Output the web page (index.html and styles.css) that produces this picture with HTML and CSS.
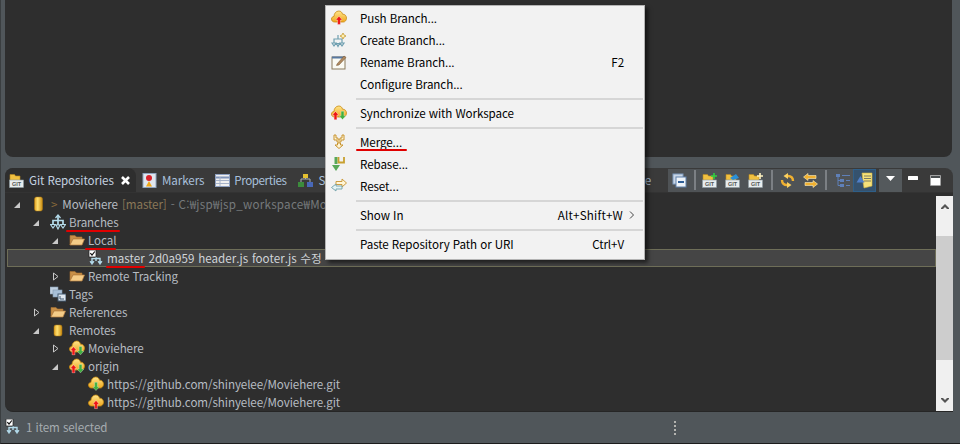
FILE: index.html
```html
<!DOCTYPE html>
<html lang="ko">
<head>
<meta charset="utf-8">
<title>Git Repositories</title>
<link rel="stylesheet" href="styles.css">
</head>
<body>
<svg class="defs" width="0" height="0" aria-hidden="true">
  <defs>
    <linearGradient id="gold" x1="0" y1="0" x2="1" y2="0"><stop offset="0" stop-color="#e0a020"/><stop offset=".4" stop-color="#ffe070"/><stop offset="1" stop-color="#c88a10"/></linearGradient>
    <linearGradient id="cloudfill" x1="0" y1="0" x2="0" y2="1"><stop offset="0" stop-color="#ffe58a"/><stop offset="1" stop-color="#f0a820"/></linearGradient>
    <symbol id="cloud" viewBox="0 0 16 16"><path d="M3.500 12C1.500 12 .5 10.500 .5 9S1.500 6.500 3 6.500C3 3.500 5 1 7.800 1c2 0 3.300 1.300 3.700 3.200 2.300-.2 4 1.600 4 3.900S14 12 12.500 12z" fill="url(#cloudfill)" stroke="#c98a10" stroke-width=".8"/></symbol>
    <symbol id="up" viewBox="0 0 8 10"><path d="M4 .3 7.800 4.700H5.600V9.800H2.400V4.700H.2z" fill="#ee1414" stroke="#fff" stroke-width=".4"/></symbol>
    <symbol id="down" viewBox="0 0 8 10"><path d="M4 9.700 7.800 5.300H5.600V.2H2.400V5.300H.2z" fill="#40b040" stroke="#e0f4e0" stroke-width=".4"/></symbol>
    <symbol id="branches" viewBox="0 0 16 16"><g fill="none" stroke="#b4dcec" stroke-width="1.700"><path d="M8 2V7M3 10V6.500H13V10"/><path d="M5.500 4 8 1 10.500 4" stroke-width="1.200"/><path d="M.5 10.500H5.500L3 14zM10.500 10.500H15.500L13 14z" stroke-width="1.100" fill="#2e2e2e"/><path d="M6 11H10L8 15z" stroke-width="1.100"/><path d="M8 7V11"/></g></symbol>
    <symbol id="folder" viewBox="0 0 16 16"><path d="M1 13V3.500H6L7.500 5H13V7H4L1 13z" fill="#c89048" stroke="#a87030" stroke-width=".6"/><path d="M1 13 4 7H15.500L13 13z" fill="#f4cc88" stroke="#b88040" stroke-width=".7"/></symbol>
    <symbol id="branchcheck" viewBox="0 0 16 16"><g fill="none" stroke="#b4dcec" stroke-width="1.400"><path d="M8 7V11M4 11V8.500H12V11"/><path d="M2 11.500H6L4 14.500zM10 11.500H14L12 14.500z" fill="#b4dcec" stroke-width=".8"/></g><rect x="1" y="0" width="7" height="7" fill="#fff" stroke="#222" stroke-width=".7"/><path d="M2.300 3.200 4 5 6.800 1.500" fill="none" stroke="#111" stroke-width="1.200"/></symbol>
    <symbol id="gitfolder" viewBox="0 0 15 15"><path d="M1 8V1.500H5.500L6.500 3H11V8z" fill="#f0c040" stroke="#b88820" stroke-width=".6"/><rect x=".5" y="7" width="14" height="7.500" fill="#e8edee" stroke="#8c9aa0" stroke-width=".6"/><text x="7.500" y="13.200" class="gittext">GIT</text></symbol>
  </defs>
</svg>

<div class="app">
  <div class="editor"></div>

  <section class="view">
    <header class="tabbar">
      <div class="tab tab-active">
        <svg class="ico15"><use href="#gitfolder"/></svg>
        <span class="tab-label">Git Repositories</span>
        <svg class="close" viewBox="0 0 11 11"><path d="M2 2 9 9M9 2 2 9" stroke="#fff" stroke-width="2.600"/></svg>
      </div>
      <div class="tab">
        <svg class="ico15" viewBox="0 0 15 15"><rect x="1" y=".5" width="13" height="14" fill="#dfe6ee" stroke="#8ea4c0"/><circle cx="7" cy="5" r="3" fill="#d8202a"/><path d="M7 8 10 13.500H4z" fill="#f0a818"/></svg>
        <span>Markers</span>
      </div>
      <div class="tab tab-tight">
        <svg class="ico15" viewBox="0 0 15 15"><rect x=".5" y="1.500" width="14" height="12" fill="#f0f0f0" stroke="#8ea0c0"/><path d="M1 4.500H14" stroke="#7f93b8" stroke-width="2"/><path d="M1 7.500H14M1 10.500H14M5 4V13" stroke="#a6b2c8"/></svg>
        <span>Properties</span>
      </div>
      <div class="tab">
        <svg class="ico15" viewBox="0 0 15 15"><path d="M7.500 2V6M3 9V6H12V9" fill="none" stroke="#a8b0b8"/><rect x="5" y="1" width="5" height="4" fill="#e4c030"/><rect x="0" y="9" width="6" height="5" fill="#3c8c3c"/><rect x="9" y="9" width="6" height="5" fill="#4868b8"/></svg>
        <span>S</span>
      </div>
      <div class="tab tab-last"><span>e</span></div>
      <div class="tools">
        <div class="toolset">
          <svg class="ico15" viewBox="0 0 15 15"><rect x="1" y="1" width="10" height="10" fill="#c9d6e6" stroke="#7f9cc0"/><rect x="4" y="4" width="10" height="10" fill="#eef3f8" stroke="#5f80aa"/><path d="M6 9H12" stroke="#2f5f98" stroke-width="2"/></svg>
          <i class="tool-sep sep-a"></i>
          <svg class="ico15" viewBox="0 0 15 15"><use href="#gitfolder" width="15" height="15"/><path d="M12 0V6M9 3H15" stroke="#30d040" stroke-width="1.600"/></svg>
          <svg class="ico15" viewBox="0 0 15 15"><use href="#gitfolder" width="15" height="15"/><path d="M5 5 11 1 14 5 8 7z" fill="#2a90d8"/></svg>
          <svg class="ico15" viewBox="0 0 15 15"><use href="#gitfolder" width="15" height="15"/><path d="M12 0V6M9 3H15" stroke="#fff4c0" stroke-width="1.600"/></svg>
          <i class="tool-sep sep-b"></i>
          <svg class="ico15" viewBox="0 0 15 15"><g fill="none" stroke="#f0b030" stroke-width="2.400"><path d="M13 8C13 4.500 11 3 8 3"/><path d="M2 7C2 10.500 4 12 7 12"/></g><path d="M8 0 3.500 3 8 6zM7 9 11.500 12 7 15z" fill="#fbd060"/></svg>
          <svg class="ico15" viewBox="0 0 15 15"><g fill="#f0b030" stroke="#fff0c0" stroke-width=".6"><path d="M.5 4 5 .5V2.500H13V5.500H5V7.500z"/><path d="M14.500 11 10 7.500V9.500H2V12.500H10V14.500z"/></g></svg>
          <i class="tool-sep sep-c"></i>
          <svg class="ico15 tree-ico" viewBox="0 0 15 15"><g fill="#5f80b8"><rect x="0" y="1" width="4" height="3"/><rect x="4" y="6" width="4" height="3"/><rect x="4" y="11" width="4" height="3"/></g><path d="M2 4V12.500H4M2 7.500H4M6 2.500H14M10 7.500H14M10 12.500H14" stroke="#5f80b8" fill="none"/></svg>
          <span class="toggled"><svg class="ico-doc" viewBox="0 0 17 17"><path d="M6 1H16V14L8 16 7 10z" fill="#f6e27a" stroke="#cfb040" stroke-width=".6"/><path d="M8 4H15M8 6.500H15M8 9H15" stroke="#7a7a60"/><path d="M4.500 4 8.500 10.500H.5z" fill="#4f7fc8"/></svg></span>
        </div>
        <span class="viewmenu"><svg class="ico-tri" viewBox="0 0 9 5"><path d="M0 0H9L4.500 5z" fill="#fff"/></svg></span>
        <span class="winbtn win-min"><svg class="ico-min" viewBox="0 0 10 4"><rect width="10" height="4" fill="#fff" rx=".5"/></svg></span>
        <span class="winbtn"><svg class="ico-max" viewBox="0 0 11 11"><rect x=".5" y=".5" width="10" height="10" fill="#fff" stroke="#aaa" stroke-width=".5"/><rect x="1" y="1" width="9" height="2" fill="#4a4e50"/></svg></span>
      </div>
    </header>

    <div class="treepane">
      <div class="tree">
        <div class="row l0">
          <svg class="tw" viewBox="0 0 11 11"><path d="M8 3V9H2z" fill="#c8c8c8"/></svg>
          <svg class="ic" viewBox="0 0 16 16"><rect x="3.500" y="1" width="8" height="14" rx="2" fill="url(#gold)" stroke="#b07a10" stroke-width=".5"/></svg>
          <span class="dirty">&gt;</span><span class="repo-name">Moviehere</span><span class="branchtag">[master]</span><span class="path">- C:₩jsp₩jsp_workspace₩Mo</span>
        </div>
        <div class="row l1">
          <svg class="tw" viewBox="0 0 11 11"><path d="M8 3V9H2z" fill="#c8c8c8"/></svg>
          <svg class="ic"><use href="#branches"/></svg>
          <span class="mark mark-branches">Branches</span>
        </div>
        <div class="row l2">
          <svg class="tw" viewBox="0 0 11 11"><path d="M8 3V9H2z" fill="#c8c8c8"/></svg>
          <svg class="ic"><use href="#folder"/></svg>
          <span class="mark mark-local">Local</span>
        </div>
        <div class="row l3 selected">
          <span class="tw"></span>
          <svg class="ic"><use href="#branchcheck"/></svg>
          <span class="bright"><span class="mark mark-master">master</span> 2d0a959 header.js footer.js 수정</span>
        </div>
        <div class="row l2">
          <svg class="tw" viewBox="0 0 11 11"><path d="M3.500 2 8 5.500 3.500 9z" fill="none" stroke="#c8c8c8"/></svg>
          <svg class="ic"><use href="#folder"/></svg>
          <span>Remote Tracking</span>
        </div>
        <div class="row l1">
          <span class="tw"></span>
          <svg class="ic" viewBox="0 0 16 16"><rect x="0" y="1" width="8" height="7" fill="#c0d0e0" stroke="#8098b0" stroke-width=".6"/><rect x="3" y="4" width="9" height="7" fill="#a8c0d8" stroke="#8098b0" stroke-width=".6"/><rect x="8" y="8" width="8" height="7" fill="#dfe8f0" stroke="#405870"/><path d="M10 10V13H14" stroke="#405870" fill="none"/></svg>
          <span>Tags</span>
        </div>
        <div class="row l1">
          <svg class="tw" viewBox="0 0 11 11"><path d="M3.500 2 8 5.500 3.500 9z" fill="none" stroke="#c8c8c8"/></svg>
          <svg class="ic"><use href="#folder"/></svg>
          <span>References</span>
        </div>
        <div class="row l1">
          <svg class="tw" viewBox="0 0 11 11"><path d="M8 3V9H2z" fill="#c8c8c8"/></svg>
          <svg class="ic" viewBox="0 0 16 16"><rect x="4" y="3" width="8" height="11" rx="2" fill="url(#gold)" stroke="#b07a10" stroke-width=".5"/></svg>
          <span>Remotes</span>
        </div>
        <div class="row l2">
          <svg class="tw" viewBox="0 0 11 11"><path d="M3.500 2 8 5.500 3.500 9z" fill="none" stroke="#c8c8c8"/></svg>
          <svg class="ic" viewBox="0 0 16 16"><use href="#cloud" width="16" height="16"/><use href="#up" x="1" y="6" width="7" height="9.500"/><use href="#down" x="8" y="6" width="7" height="9.500"/></svg>
          <span>Moviehere</span>
        </div>
        <div class="row l2">
          <svg class="tw" viewBox="0 0 11 11"><path d="M8 3V9H2z" fill="#c8c8c8"/></svg>
          <svg class="ic" viewBox="0 0 16 16"><use href="#cloud" width="16" height="16"/><use href="#up" x="1" y="6" width="7" height="9.500"/><use href="#down" x="8" y="6" width="7" height="9.500"/></svg>
          <span>origin</span>
        </div>
        <div class="row l3">
          <span class="tw"></span>
          <svg class="ic" viewBox="0 0 16 16"><use href="#cloud" width="16" height="16"/><use href="#down" x="4.500" y="5.500" width="7" height="10"/></svg>
          <span>https://github.com/shinyelee/Moviehere.git</span>
        </div>
        <div class="row l3">
          <span class="tw"></span>
          <svg class="ic" viewBox="0 0 16 16"><use href="#cloud" width="16" height="16"/><use href="#up" x="4.500" y="5.500" width="7" height="10"/></svg>
          <span>https://github.com/shinyelee/Moviehere.git</span>
        </div>
      </div>
      <div class="scrollbar">
        <svg class="sb-arrow" viewBox="0 0 8 6"><path d="M0 5 4 1 8 5V6H6L4 4 2 6H0z" fill="#555"/></svg>
        <div class="sb-track"><div class="sb-thumb"></div></div>
        <svg class="sb-arrow" viewBox="0 0 8 6"><path d="M0 1 4 5 8 1V0H6L4 2 2 0H0z" fill="#555"/></svg>
      </div>
    </div>
  </section>

  <footer class="status">
    <svg class="status-ic"><use href="#branchcheck"/></svg>
    <span class="status-text">1 item selected</span>
    <span class="grip"><i></i><i></i><i></i><i></i></span>
  </footer>
</div>

<nav class="menu">
  <div class="mi"><svg class="mi-ic" viewBox="0 0 16 16"><use href="#cloud" width="16" height="16"/><use href="#up" x="4.500" y="5" width="7" height="10.500"/></svg><span class="mi-label">Push Branch...</span></div>
  <div class="mi"><svg class="mi-ic" viewBox="0 0 16 16"><g fill="none" stroke="#6f9fb0" stroke-width="1.200"><path d="M7 3V7M3 11V7H11V11"/><path d="M1 11H5L3 14zM5.500 11.500H8.500L7 14.500zM9 11H13L11 14z"/></g><path d="M12 1 13 3 15 4 13 5 12 7 11 5 9 4 11 3z" fill="#fff0b0" stroke="#c09020" stroke-width=".7"/></svg><span class="mi-label">Create Branch...</span></div>
  <div class="mi"><svg class="mi-ic" viewBox="0 0 16 16"><rect x="1" y="3" width="13" height="12" fill="#fbfbf4" stroke="#8a7a5c"/><path d="M1 3.500H14" stroke="#5878a0" stroke-width="2"/><path d="M6 10 13 2 15 3.500 8 11 5.500 11.500z" fill="#b08a60" stroke="#705030" stroke-width=".5"/></svg><span class="mi-label">Rename Branch...</span><span class="mi-key">F2</span></div>
  <div class="mi"><span class="mi-ic"></span><span class="mi-label">Configure Branch...</span></div>
  <hr class="sep">
  <div class="mi"><svg class="mi-ic" viewBox="0 0 16 16"><use href="#cloud" width="16" height="16"/><use href="#up" x="1" y="5.500" width="7" height="10"/><use href="#down" x="8" y="5.500" width="7" height="10"/></svg><span class="mi-label">Synchronize with Workspace</span></div>
  <hr class="sep">
  <div class="mi"><svg class="mi-ic" viewBox="0 0 16 16"><g fill="#fff6d8" stroke="#c89430" stroke-width="1"><path d="M3 1V6H6V8H10V6H13V1H11V4H9V6H7V4H5V1z"/><path d="M6.500 9H9.500V11H12L8 14.500 4 11H6.500z"/></g></svg><span class="mi-label"><span class="mark mark-merge">Merge...</span></span></div>
  <div class="mi"><svg class="mi-ic" viewBox="0 0 16 16"><path d="M5 1V8" stroke="#58a858" stroke-width="3" fill="none"/><path d="M1 9H9L5 15z" fill="#58a858"/><path d="M7.500 1V6.500H13V1" fill="none" stroke="#c8a030" stroke-width="1.800"/></svg><span class="mi-label">Rebase...</span></div>
  <div class="mi"><svg class="mi-ic" viewBox="0 0 16 16"><path d="M11 1V3.500H5V6.500H11V9L15.500 5z" fill="#fff6d8" stroke="#c89430" stroke-width=".9"/><path d="M5 6V8H11V11H5V13L.5 9.500z" fill="#e4f2f4" stroke="#6fa0a8" stroke-width=".9"/></svg><span class="mi-label">Reset...</span></div>
  <hr class="sep">
  <div class="mi"><span class="mi-ic"></span><span class="mi-label">Show In</span><span class="mi-key mi-key-wide">Alt+Shift+W</span><svg class="mi-more" viewBox="0 0 5 8"><path d="M1 .5 4.500 4 1 7.500" fill="none" stroke="#444"/></svg></div>
  <hr class="sep">
  <div class="mi"><span class="mi-ic"></span><span class="mi-label">Paste Repository Path or URI</span><span class="mi-key">Ctrl+V</span></div>
</nav>
</body>
</html>
```
FILE: styles.css
```css
* { box-sizing: border-box; }
html, body { margin: 0; padding: 0; }
body {
  width: 960px;
  height: 444px;
  overflow: hidden;
  position: relative;
  background: #50565a;
  font-family: "Noto Sans CJK KR", "Noto Sans", sans-serif;
  font-size: 11.6px;
  letter-spacing: -.08px;
  line-height: 18px;
  color: #b4bac0;
}
.defs { position: absolute; }
.gittext { font: bold 5.500px "Liberation Sans", sans-serif; fill: #555; text-anchor: middle; letter-spacing: 0; }

.app {
  height: 444px;
  display: flex;
  flex-direction: column;
  border-left: 1px solid #3a3e40;
  border-bottom: 1px solid #1c1c1c;
}
.editor {
  height: 157px;
  margin: 0 8px 0 4px;
  background: #2e2e2e;
  border-radius: 0 0 8px 8px;
  flex: none;
}

.view {
  margin: 11px 7px 0 4px;
  height: 244px;
  display: flex;
  flex-direction: column;
  flex: none;
}
.tabbar {
  height: 25px;
  flex: none;
  display: flex;
  align-items: center;
  background: #3a3a3a;
  border-radius: 8px 8px 0 0;
  border-bottom: 1px solid #333;
}
.tab {
  height: 100%;
  display: flex;
  align-items: center;
  gap: 5px;
  padding-left: 6px;
  padding-right: 5px;
  color: #a9c0dc;
  white-space: nowrap;
}
.tab-tight { gap: 4px; letter-spacing: -.42px; padding-right: 6px; }
.tab-active {
  width: 131px;
  background: #2e2e2e;
  border-radius: 8px 8px 0 0;
  padding-left: 4px;
  padding-right: 0;
  color: #c4d2e0;
}
.tab-label { flex: 1; }
.close { width: 11px; height: 11px; margin-right: 5px; flex: none; }
.ico15 { width: 15px; height: 15px; flex: none; display: block; }
.ico-doc { width: 17px; height: 17px; flex: none; display: block; }
.tab-last { margin-left: auto; padding: 0; margin-right: 17px; }

.tools {
  display: flex;
  align-items: center;
  height: 23px;
  width: 277px;
  flex: none;
  margin-right: 8px;
  gap: 8px;
}
.toolset {
  display: flex;
  align-items: center;
  height: 23px;
  width: 208px;
  flex: none;
  background: #4f5356;
  padding-left: 4px;
  gap: 8px;
}
.tool-sep { width: 2px; height: 20px; background: #7c8084; flex: none; }
.sep-a { margin: 0 -2px 0 -1px; }
.sep-b { margin: 0 -1px 0 0; }
.sep-c { margin: 0 0 0 -1px; }
.tree-ico { margin-left: 1px; }
.toggled {
  width: 23px;
  height: 23px;
  margin-left: -6px;
  background: #35526e;
  border: 1px solid #2f5f88;
  display: flex;
  align-items: center;
  justify-content: center;
  flex: none;
}
.viewmenu {
  width: 23px;
  height: 23px;
  margin-left: -5px;
  background: #54595c;
  display: flex;
  align-items: center;
  justify-content: center;
  flex: none;
}
.ico-tri { width: 9px; height: 5px; margin-bottom: 4px; }
.winbtn { width: 14px; display: flex; justify-content: center; flex: none; }
.win-min { margin-left: -4px; }
.ico-min { width: 10px; height: 4px; margin-bottom: 5px; }
.ico-max { width: 11px; height: 11px; }

.treepane {
  flex: 1;
  min-height: 0;
  display: flex;
  align-items: stretch;
  background: #2e2e2e;
  border-radius: 0 0 0 8px;
  border-bottom: 1px solid #262626;
  padding-top: 3px;
}
.tree { flex: 1; min-width: 0; overflow: hidden; margin-top: -1px; }
.row {
  height: 18px;
  display: flex;
  align-items: center;
  white-space: pre;
  color: #b6bcc2;
}
.l0 { padding-left: 7px; }
.l1 { padding-left: 26px; }
.l2 { padding-left: 45px; }
.l3 { padding-left: 64px; }
.tw { width: 11px; height: 11px; flex: none; margin-right: 8px; display: block; }
.ic { width: 16px; height: 16px; flex: none; margin-right: 3px; display: block; }
.selected {
  background: #454545;
  border: 1px solid #6e6e58;
  margin-left: 2px;
  padding-left: 61px;
}
.bright { color: #d0d4d8; letter-spacing: .03px; word-spacing: .4px; }
.dirty { color: #8a6a3a; margin: 0 5px 0 1px; }
.branchtag { color: #8a7858; margin-left: 4px; }
.path { color: #767a7c; margin-left: 4px; letter-spacing: .26px; }

.mark { position: relative; }
.mark::after {
  content: "";
  position: absolute;
  height: 2px;
  background: #e00000;
  border-radius: 1px;
}
.mark-branches::after { left: -3px; right: -1px; bottom: -1px; }
.mark-local::after { left: -3px; right: 0; bottom: -1px; }
.mark-master::after { left: -1px; right: 0; bottom: -2px; }
.mark-merge::after { left: -4px; right: -5px; bottom: -1px; }

.scrollbar {
  width: 17px;
  flex: none;
  background: #f0f0f0;
  display: flex;
  flex-direction: column;
  align-items: center;
}
.sb-arrow { width: 8px; height: 6px; margin: 7px 0; flex: none; }
.sb-track { flex: 1; width: 100%; }
.sb-thumb { height: 124px; margin-top: 20px; background: #cdcdcd; }

.status {
  flex: 1;
  display: flex;
  align-items: center;
  padding-left: 4px;
  position: relative;
  padding-bottom: 1px;
}
.status-ic { width: 16px; height: 16px; flex: none; }
.status-text { margin-left: 5px; color: #a6acb0; }
.grip {
  display: flex;
  flex-direction: column;
  gap: 2px;
  position: absolute;
  left: 673px;
  top: 9px;
}
.grip i { width: 2px; height: 2px; background: #b4b4b0; display: block; }

.menu {
  position: absolute;
  left: 325px;
  top: 5px;
  width: 320px;
  height: 255px;
  background: #f2f2f2;
  border: 1px solid #b4b4b4;
  padding: 1px 0 0;
  color: #000;
  box-shadow: 3px 3px 4px rgba(0, 0, 0, .55);
}
.mi {
  height: 22px;
  display: flex;
  align-items: center;
  padding-left: 5px;
  padding-right: 10px;
  white-space: nowrap;
}
.mi-ic { width: 16px; height: 16px; flex: none; margin-right: 13px; display: block; }
.mi-label { flex: 1; }
.mi-key { margin-right: 10px; }
.mi-key-wide { letter-spacing: .2px; }
.mi-more { width: 5px; height: 8px; margin-left: -4px; }
.sep {
  height: 2px;
  margin: 3px 1px 2px 30px;
  border: 0;
  background: #d6d6d6;
}
```
